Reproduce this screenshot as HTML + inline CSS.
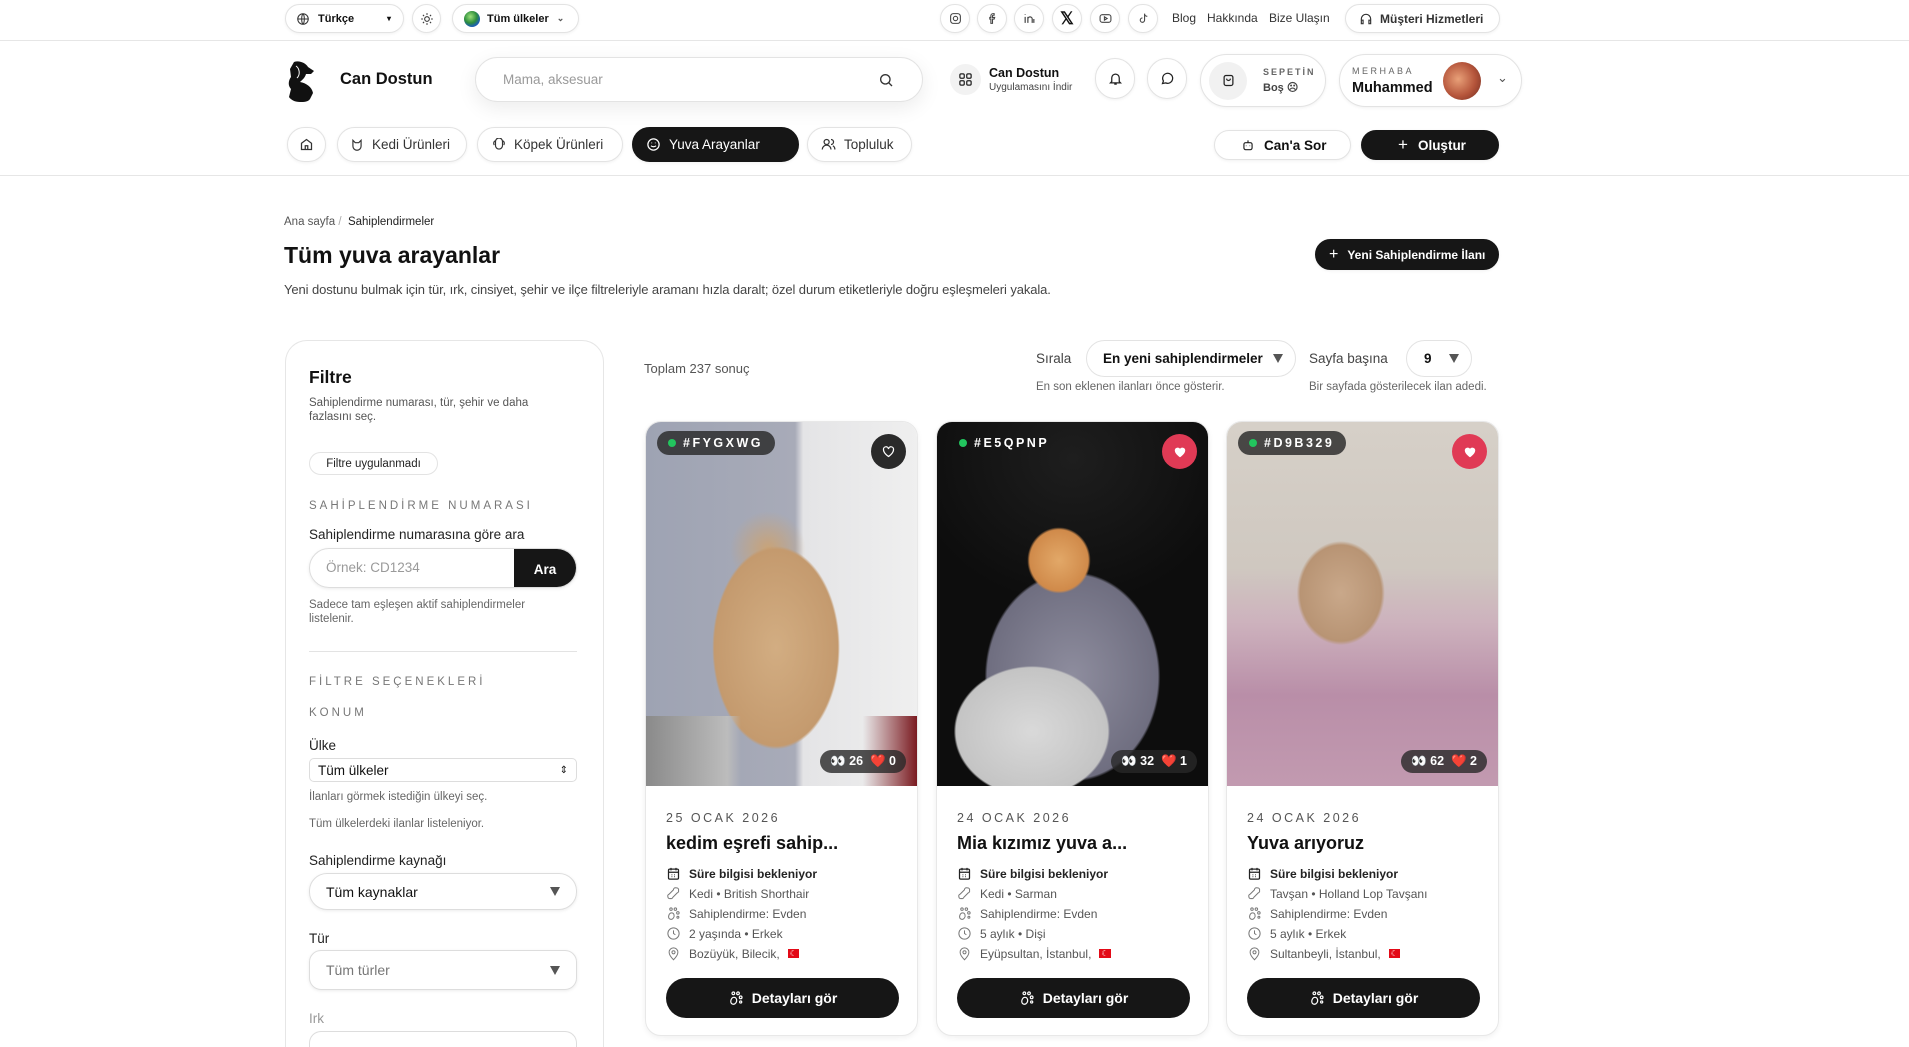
<!DOCTYPE html>
<html><head><meta charset="utf-8">
<style>
*{box-sizing:border-box;margin:0;padding:0}
html,body{width:1909px;height:1047px;overflow:hidden}
body{background:#fff;font-family:"Liberation Sans",sans-serif;color:#111;position:relative}
#wrap{position:absolute;left:0;top:0;width:1909px;height:1047px;overflow:hidden}
.a{position:absolute}
.pill{position:absolute;border:1px solid #e3e3e3;border-radius:999px;background:#fff;display:flex;align-items:center;box-shadow:0 1px 3px rgba(0,0,0,.06)}
.dark{background:#161616;color:#fff;border-color:#161616}
.t{position:absolute;white-space:nowrap}
.cap{letter-spacing:3px;font-size:11.5px;color:#777}
svg{display:block}
.card{position:absolute;top:421px;width:273px;height:615px;border:1px solid #e8e8e8;border-radius:16px;background:#fff;overflow:hidden;box-shadow:0 2px 6px rgba(0,0,0,.06)}
.img{position:absolute;left:0;top:0;width:100%;height:364px}
.tag{position:absolute;left:11px;top:9px;height:24px;border-radius:12px;background:rgba(40,40,40,.82);color:#fff;font-size:12.5px;font-weight:bold;letter-spacing:2.5px;display:flex;align-items:center;padding:0 12px 0 26px}
.tag:before{content:"";position:absolute;left:11px;top:8px;width:8px;height:8px;border-radius:50%;background:#22c55e}
.hb{position:absolute;right:11px;top:12px;width:35px;height:35px;border-radius:50%;display:flex;align-items:center;justify-content:center}
.st{position:absolute;right:11px;top:328px;height:23px;border-radius:12px;background:rgba(40,40,40,.8);color:#fff;font-size:12.5px;font-weight:bold;display:flex;align-items:center;padding:0 10px;gap:5px}
.date{position:absolute;left:20px;top:389px;font-size:12.5px;letter-spacing:2.5px;color:#555}
.ttl{position:absolute;left:20px;top:411px;font-size:18px;font-weight:bold;color:#111}
.row{position:absolute;left:20px;font-size:12px;color:#555;display:flex;align-items:center;gap:8px}
.row svg{width:15px;height:15px}
.btn{position:absolute;left:20px;top:556px;width:233px;height:40px;border-radius:20px;background:#161616;color:#fff;font-size:14px;font-weight:bold;display:flex;align-items:center;justify-content:center;gap:8px}
.sel{position:absolute;left:309px;width:268px;border:1px solid #ddd;border-radius:18px;display:flex;align-items:center;padding:0 16px;font-size:14px;box-shadow:0 1px 3px rgba(0,0,0,.08)}
.tri{position:absolute;right:16px;width:0;height:0;border-left:5px solid transparent;border-right:5px solid transparent;border-top:9px solid #555}
.lbl{position:absolute;left:309px;font-size:13.5px;color:#222}
.hint{position:absolute;left:309px;font-size:11.5px;color:#666;line-height:14px}
</style></head><body><div id="wrap">

<!-- top bar -->
<div class="a" style="left:0;top:40px;width:1909px;height:1px;background:#e6e6e6"></div>
<div class="pill" style="left:285px;top:4px;width:119px;height:29px;padding-left:10px;font-size:11px;font-weight:bold">
<svg width="14" height="14" viewBox="0 0 24 24" fill="none" stroke="#333" stroke-width="1.8"><circle cx="12" cy="12" r="9"/><path d="M3 12h18M12 3c3 3 3 15 0 18M12 3c-3 3-3 15 0 18"/></svg>
<span style="margin-left:8px">Türkçe</span><span style="position:absolute;right:12px;font-size:8px">▾</span></div>
<div class="pill" style="left:412px;top:4px;width:29px;height:29px;justify-content:center"><svg width="14" height="14" viewBox="0 0 24 24" fill="none" stroke="#333" stroke-width="1.8"><circle cx="12" cy="12" r="4"/><path d="M12 2v3M12 19v3M2 12h3M19 12h3M5 5l2 2M17 17l2 2M5 19l2-2M17 7l2-2"/></svg></div>
<div class="pill" style="left:452px;top:4px;width:127px;height:29px;padding-left:11px;font-size:11px;font-weight:bold">
<span style="width:16px;height:16px;border-radius:50%;background:radial-gradient(circle at 40% 35%,#9be07a,#2d8e3c 45%,#1d5fb0 70%)"></span><span style="margin-left:7px">Tüm ülkeler</span><span style="margin-left:8px;font-size:9px;color:#555">⌄</span></div>
<div class="pill" style="left:940px;top:4px;width:30px;height:29px;justify-content:center"><svg width="13" height="13" viewBox="0 0 24 24" fill="none" stroke="#444" stroke-width="2"><rect x="3" y="3" width="18" height="18" rx="5"/><circle cx="12" cy="12" r="4"/></svg></div>
<div class="pill" style="left:977px;top:4px;width:30px;height:29px;justify-content:center"><svg width="13" height="13" viewBox="0 0 24 24" fill="none" stroke="#444" stroke-width="2"><path d="M15 3h-2a4 4 0 0 0-4 4v3H7v3h2v8h3v-8h3l1-3h-4V7a1 1 0 0 1 1-1h2z"/></svg></div>
<div class="pill" style="left:1014px;top:4px;width:30px;height:29px;justify-content:center"><svg width="13" height="13" viewBox="0 0 24 24" fill="none" stroke="#444" stroke-width="2.2"><path d="M4 9v11M4 4v1M9 20V9M9 13a4 4 0 0 1 8 0v7M20 20v-7"/></svg></div>
<div class="pill" style="left:1052px;top:4px;width:30px;height:29px;justify-content:center;font-size:17px;font-weight:bold">𝕏</div>
<div class="pill" style="left:1090px;top:4px;width:30px;height:29px;justify-content:center"><svg width="13" height="13" viewBox="0 0 24 24" fill="none" stroke="#444" stroke-width="2"><rect x="2" y="5" width="20" height="14" rx="4"/><path d="M10 9l5 3-5 3z"/></svg></div>
<div class="pill" style="left:1128px;top:4px;width:30px;height:29px;justify-content:center"><svg width="13" height="13" viewBox="0 0 24 24" fill="none" stroke="#444" stroke-width="2"><path d="M14 3v12a4 4 0 1 1-4-4M14 3c0 3 2 5 5 5"/></svg></div>
<div class="t" style="left:1172px;top:11px;font-size:12px;color:#333">Blog</div>
<div class="t" style="left:1207px;top:11px;font-size:12px;color:#333">Hakkında</div>
<div class="t" style="left:1269px;top:11px;font-size:12px;color:#333">Bize Ulaşın</div>
<div class="pill" style="left:1345px;top:4px;width:155px;height:29px;padding-left:13px;font-size:12px;font-weight:bold;color:#333"><svg width="14" height="14" viewBox="0 0 24 24" fill="none" stroke="#333" stroke-width="2"><path d="M4 15v-3a8 8 0 0 1 16 0v3M4 14h3v6H4zM17 14h3v6h-3z"/></svg><span style="margin-left:7px">Müşteri Hizmetleri</span></div>

<!-- header -->
<svg class="a" style="left:284px;top:60px" width="34" height="42" viewBox="0 0 34 42"><path d="M10 2c5-2 12 1 14 5l6 4-3 3-5 0c-1 4-4 6-6 8 6 1 12 5 13 11l-3 6c-2 3-6 3-10 3-5 0-9-2-11-5l2-8c-3-3-3-8 0-12l-1-8z" fill="#111"/><path d="M12 6c3 2 5 8 1 12" stroke="#fff" stroke-width="1" fill="none"/></svg>
<div class="t" style="left:340px;top:70px;font-size:16.5px;font-weight:bold">Can Dostun</div>
<div class="pill" style="left:475px;top:57px;width:448px;height:45px;padding-left:27px;font-size:13.5px;color:#9a9a9a;box-shadow:0 6px 20px rgba(0,0,0,.08)">Mama, aksesuar<svg style="position:absolute;right:28px" width="16" height="16" viewBox="0 0 24 24" fill="none" stroke="#333" stroke-width="2"><circle cx="11" cy="11" r="7"/><path d="M16 16l5 5"/></svg></div>
<div class="a" style="left:950px;top:64px;width:31px;height:31px;border-radius:50%;background:#f2f2f2;display:flex;align-items:center;justify-content:center"><svg width="15" height="15" viewBox="0 0 24 24" fill="none" stroke="#222" stroke-width="2"><rect x="3" y="3" width="7" height="7" rx="2"/><rect x="14" y="3" width="7" height="7" rx="2"/><rect x="3" y="14" width="7" height="7" rx="2"/><rect x="14" y="14" width="7" height="7" rx="2"/></svg></div>
<div class="t" style="left:989px;top:66px;font-size:12.5px;font-weight:bold">Can Dostun</div>
<div class="t" style="left:989px;top:82px;font-size:10px;color:#444">Uygulamasını İndir</div>
<div class="pill" style="left:1095px;top:58px;width:40px;height:41px;justify-content:center"><svg width="15" height="15" viewBox="0 0 24 24" fill="none" stroke="#222" stroke-width="2"><path d="M6 17V11a6 6 0 0 1 12 0v6l2 2H4zM10 21h4"/></svg></div>
<div class="pill" style="left:1147px;top:58px;width:40px;height:41px;justify-content:center"><svg width="15" height="15" viewBox="0 0 24 24" fill="none" stroke="#222" stroke-width="2"><path d="M4 20l1.5-4A8 8 0 1 1 9 19z"/></svg></div>
<div class="pill" style="left:1200px;top:54px;width:126px;height:53px;padding-left:8px"><span style="width:38px;height:38px;border-radius:50%;background:#f1f1f1;display:flex;align-items:center;justify-content:center"><svg width="15" height="15" viewBox="0 0 24 24" fill="none" stroke="#222" stroke-width="2"><rect x="5" y="4" width="14" height="16" rx="3"/><path d="M9 9a3 3 0 0 0 6 0"/></svg></span>
<span style="position:absolute;left:62px;top:12px;font-size:9px;letter-spacing:2px;color:#666;font-weight:bold">SEPETİN</span><span style="position:absolute;left:62px;top:26px;font-size:11px;color:#444;font-weight:bold">Boş ☹</span></div>
<div class="pill" style="left:1339px;top:54px;width:183px;height:53px">
<span style="position:absolute;left:12px;top:11px;font-size:9px;letter-spacing:2.5px;color:#666">MERHABA</span>
<span style="position:absolute;left:12px;top:25px;font-size:14.5px;font-weight:bold">Muhammed</span>
<span style="position:absolute;left:103px;top:7px;width:38px;height:38px;border-radius:50%;background:radial-gradient(circle at 40% 45%,#e8a078,#b5553b 55%,#6d2a1e)"></span>
<span style="position:absolute;left:157px;top:15px;font-size:13px;color:#555">⌄</span></div>

<!-- nav -->
<div class="pill" style="left:287px;top:127px;width:39px;height:35px;justify-content:center"><svg width="15" height="15" viewBox="0 0 24 24" fill="none" stroke="#333" stroke-width="2"><path d="M4 10l8-6 8 6v10H4zM10 20v-6h4v6"/></svg></div>
<div class="pill" style="left:337px;top:127px;width:130px;height:35px;padding-left:12px;font-size:13.5px;color:#333"><svg width="14" height="14" viewBox="0 0 24 24" fill="none" stroke="#333" stroke-width="2"><path d="M5 4l4 4h6l4-4v10a7 7 0 0 1-14 0z"/></svg><span style="margin-left:8px">Kedi Ürünleri</span></div>
<div class="pill" style="left:477px;top:127px;width:146px;height:35px;padding-left:14px;font-size:13.5px;color:#333"><svg width="14" height="14" viewBox="0 0 24 24" fill="none" stroke="#333" stroke-width="2"><path d="M6 5c-3 0-4 5-2 7M18 5c3 0 4 5 2 7M6 6a6 6 0 0 1 12 0v7a6 6 0 0 1-12 0z"/></svg><span style="margin-left:8px">Köpek Ürünleri</span></div>
<div class="pill dark" style="left:632px;top:127px;width:167px;height:35px;padding-left:13px;font-size:13.5px"><svg width="15" height="15" viewBox="0 0 24 24" fill="none" stroke="#fff" stroke-width="2"><circle cx="12" cy="12" r="9"/><path d="M8 14a5 4 0 0 0 8 0M9 9v1M15 9v1"/></svg><span style="margin-left:8px">Yuva Arayanlar</span></div>
<div class="pill" style="left:807px;top:127px;width:105px;height:35px;padding-left:13px;font-size:13.5px;color:#333"><svg width="15" height="15" viewBox="0 0 24 24" fill="none" stroke="#333" stroke-width="2"><circle cx="9" cy="8" r="4"/><path d="M2 20a7 7 0 0 1 14 0M16 4a4 4 0 0 1 0 8M19 14a6 6 0 0 1 3 6"/></svg><span style="margin-left:8px">Topluluk</span></div>
<div class="pill" style="left:1214px;top:130px;width:137px;height:30px;padding-left:26px;font-size:13.5px;font-weight:bold"><svg width="14" height="14" viewBox="0 0 24 24" fill="none" stroke="#222" stroke-width="2"><rect x="5" y="8" width="14" height="12" rx="3"/><path d="M12 4v4M9 13v1M15 13v1"/></svg><span style="margin-left:9px">Can'a Sor</span></div>
<div class="pill dark" style="left:1361px;top:130px;width:138px;height:30px;padding-left:36px;font-size:13.5px;font-weight:bold"><span style="font-size:17px;font-weight:normal">+</span><span style="margin-left:10px">Oluştur</span></div>
<div class="a" style="left:0;top:175px;width:1909px;height:1px;background:#e6e6e6"></div>

<!-- page head -->
<div class="t" style="left:284px;top:216px;font-size:11.5px;color:#555">Ana sayfa <span style="color:#aaa">/</span> &nbsp;<span style="color:#222">Sahiplendirmeler</span></div>
<div class="t" style="left:284px;top:242px;font-size:23px;font-weight:bold">Tüm yuva arayanlar</div>
<div class="t" style="left:284px;top:282px;font-size:13px;color:#444;letter-spacing:-.1px">Yeni dostunu bulmak için tür, ırk, cinsiyet, şehir ve ilçe filtreleriyle aramanı hızla daralt; özel durum etiketleriyle doğru eşleşmeleri yakala.</div>
<div class="pill dark" style="left:1315px;top:239px;width:184px;height:31px;padding-left:13px;font-size:12px;font-weight:bold"><span style="font-size:16px;font-weight:normal">+</span><span style="margin-left:9px">Yeni Sahiplendirme İlanı</span></div>

<!-- filter -->
<div class="a" style="left:285px;top:340px;width:319px;height:707px;border:1px solid #e6e6e6;border-bottom:none;border-radius:22px 22px 0 0"></div>
<div class="t" style="left:309px;top:367px;font-size:17.5px;font-weight:bold">Filtre</div>
<div class="hint" style="top:396px;font-size:11.5px;color:#555">Sahiplendirme numarası, tür, şehir ve daha<br>fazlasını seç.</div>
<div class="pill" style="left:309px;top:452px;width:129px;height:23px;justify-content:center;font-size:11.5px;color:#222;box-shadow:none">Filtre uygulanmadı</div>
<div class="t cap" style="left:309px;top:500px">SAHİPLENDİRME NUMARASI</div>
<div class="lbl" style="top:527px">Sahiplendirme numarasına göre ara</div>
<div class="a" style="left:309px;top:548px;width:268px;height:40px;border:1px solid #ddd;border-radius:20px;overflow:hidden;box-shadow:0 1px 3px rgba(0,0,0,.08)"><span style="position:absolute;left:16px;top:11px;font-size:13.5px;color:#9a9a9a">Örnek: CD1234</span><span style="position:absolute;right:0;top:0;width:62px;height:40px;background:#161616;color:#fff;font-size:13.5px;font-weight:bold;display:flex;align-items:center;justify-content:center">Ara</span></div>
<div class="hint" style="top:598px">Sadece tam eşleşen aktif sahiplendirmeler<br>listelenir.</div>
<div class="a" style="left:309px;top:651px;width:268px;height:1px;background:#e3e3e3"></div>
<div class="t cap" style="left:309px;top:676px">FİLTRE SEÇENEKLERİ</div>
<div class="t cap" style="left:309px;top:707px">KONUM</div>
<div class="lbl" style="top:738px">Ülke</div>
<div class="sel" style="top:758px;height:24px;border-radius:5px;padding-left:8px;font-size:13.5px;box-shadow:none">Tüm ülkeler<span style="position:absolute;right:8px;font-size:10px">⇕</span></div>
<div class="hint" style="top:790px">İlanları görmek istediğin ülkeyi seç.</div>
<div class="hint" style="top:817px">Tüm ülkelerdeki ilanlar listeleniyor.</div>
<div class="lbl" style="top:853px">Sahiplendirme kaynağı</div>
<div class="sel" style="top:873px;height:37px">Tüm kaynaklar<span class="tri"></span></div>
<div class="lbl" style="top:931px">Tür</div>
<div class="sel" style="top:950px;height:40px;border-radius:12px;color:#777">Tüm türler<span class="tri"></span></div>
<div class="lbl" style="top:1011px;color:#999">Irk</div>
<div class="a" style="left:309px;top:1031px;width:268px;height:16px;border:1px solid #ddd;border-bottom:none;border-radius:12px 12px 0 0"></div>

<!-- results header -->
<div class="t" style="left:644px;top:361px;font-size:13px;color:#555">Toplam 237 sonuç</div>
<div class="t" style="left:1036px;top:351px;font-size:13.5px;color:#444">Sırala</div>
<div class="pill" style="left:1086px;top:340px;width:210px;height:37px;padding-left:16px;font-size:13.5px;font-weight:bold;box-shadow:none">En yeni sahiplendirmeler<span class="tri" style="right:12px"></span></div>
<div class="t" style="left:1309px;top:351px;font-size:13.5px;color:#444">Sayfa başına</div>
<div class="pill" style="left:1406px;top:340px;width:66px;height:37px;padding-left:17px;font-size:13.5px;font-weight:bold;box-shadow:none">9<span class="tri" style="right:12px"></span></div>
<div class="t" style="left:1036px;top:381px;font-size:11.5px;color:#666">En son eklenen ilanları önce gösterir.</div>
<div class="t" style="left:1309px;top:381px;font-size:11.5px;color:#666">Bir sayfada gösterilecek ilan adedi.</div>

<!-- cards -->
<svg width="0" height="0" style="position:absolute"><defs>
<symbol id="cal" viewBox="0 0 24 24"><g fill="none" stroke="#222" stroke-width="2"><rect x="4" y="5" width="16" height="16" rx="2"/><path d="M4 10h16M8 3v4M16 3v4M9 14h1M13 14h1M9 17h1M13 17h1"/></g></symbol>
<symbol id="bone" viewBox="0 0 24 24"><path d="M17 3a3 3 0 0 1 3 4 3 3 0 0 1-2 4l-7 7a3 3 0 0 1-4 2 3 3 0 0 1-4-3 3 3 0 0 1 2-4l7-7a3 3 0 0 1 4-3z" fill="none" stroke="#777" stroke-width="1.6"/></symbol>
<symbol id="paw" viewBox="0 0 24 24"><g fill="none" stroke="#777" stroke-width="1.6"><circle cx="8" cy="5" r="2"/><circle cx="15" cy="5" r="2"/><circle cx="19" cy="11" r="2"/><circle cx="19" cy="18" r="1.6"/><path d="M5 20c-2-3 0-9 4-9s5 5 3 8-5 3-7 1z"/></g></symbol>
<symbol id="pawW" viewBox="0 0 24 24"><g fill="none" stroke="#fff" stroke-width="1.8"><circle cx="8" cy="5" r="2"/><circle cx="15" cy="5" r="2"/><circle cx="19" cy="11" r="2"/><circle cx="19" cy="18" r="1.6"/><path d="M5 20c-2-3 0-9 4-9s5 5 3 8-5 3-7 1z"/></g></symbol>
<symbol id="clk" viewBox="0 0 24 24"><g fill="none" stroke="#777" stroke-width="1.6"><circle cx="12" cy="12" r="9"/><path d="M12 7v5l3 2"/></g></symbol>
<symbol id="pin" viewBox="0 0 24 24"><g fill="none" stroke="#777" stroke-width="1.6"><path d="M12 22s7-7 7-12a7 7 0 0 0-14 0c0 5 7 12 7 12z"/><circle cx="12" cy="10" r="2.5"/></g></symbol>
</defs></svg>

<div class="card" style="left:645px">
<div class="img" style="background:radial-gradient(ellipse 38% 45% at 48% 62%,#d2ad82 0,#c49a6e 60%,transparent 62%),radial-gradient(ellipse 20% 15% at 45% 35%,#c9a377,transparent 70%),linear-gradient(90deg,#9ea3b3 0,#a8abb8 55%,#e4e4e6 58%,#efefef 100%)"><div style="position:absolute;left:0;bottom:0;width:100%;height:70px;background:linear-gradient(90deg,#8a8a8a,#bcbcbc 30%,transparent 35%,transparent 80%,#7a1a20)"></div></div>
<div class="tag">#FYGXWG</div>
<div class="hb" style="background:#2a2a2a"><svg width="15" height="15" viewBox="0 0 24 24" fill="none" stroke="#fff" stroke-width="2"><path d="M12 20s-8-5-8-11a4 4 0 0 1 8-1 4 4 0 0 1 8 1c0 6-8 11-8 11z"/></svg></div>
<div class="st">👀 26 &nbsp;❤️ 0</div>
<div class="date">25 OCAK 2026</div><div class="ttl">kedim eşrefi sahip...</div>
<div class="row" style="top:444px;color:#222;font-weight:bold"><svg><use href="#cal"/></svg>Süre bilgisi bekleniyor</div>
<div class="row" style="top:464px"><svg><use href="#bone"/></svg>Kedi • British Shorthair</div>
<div class="row" style="top:484px"><svg><use href="#paw"/></svg>Sahiplendirme: Evden</div>
<div class="row" style="top:504px"><svg><use href="#clk"/></svg>2 yaşında • Erkek</div>
<div class="row" style="top:524px"><svg><use href="#pin"/></svg>Bozüyük, Bilecik, <span style="background:#e30a17;color:#fff;font-size:8px;padding:0 2px">☾</span></div>
<div class="btn"><svg width="16" height="16"><use href="#pawW"/></svg>Detayları gör</div>
</div>

<div class="card" style="left:936px">
<div class="img" style="background:radial-gradient(ellipse 18% 14% at 45% 38%,#e2a868,#d08a4a 60%,transparent 65%),radial-gradient(ellipse 40% 25% at 35% 85%,#d9d9d9,#c4c4c4 70%,transparent 72%),radial-gradient(ellipse 45% 40% at 50% 70%,#8e8d9e,#6f6e80 70%,transparent 72%),radial-gradient(ellipse 60% 40% at 50% 10%,#1e1e1e,#0d0d0d)"></div>
<div class="tag" style="background:transparent">#E5QPNP</div>
<div class="hb" style="background:#e03a55"><svg width="14" height="14" viewBox="0 0 24 24" fill="#fff"><path d="M12 21s-9-5.5-9-12a5 5 0 0 1 9-2.5A5 5 0 0 1 21 9c0 6.5-9 12-9 12z"/></svg></div>
<div class="st">👀 32 &nbsp;❤️ 1</div>
<div class="date">24 OCAK 2026</div><div class="ttl">Mia kızımız yuva a...</div>
<div class="row" style="top:444px;color:#222;font-weight:bold"><svg><use href="#cal"/></svg>Süre bilgisi bekleniyor</div>
<div class="row" style="top:464px"><svg><use href="#bone"/></svg>Kedi • Sarman</div>
<div class="row" style="top:484px"><svg><use href="#paw"/></svg>Sahiplendirme: Evden</div>
<div class="row" style="top:504px"><svg><use href="#clk"/></svg>5 aylık • Dişi</div>
<div class="row" style="top:524px"><svg><use href="#pin"/></svg>Eyüpsultan, İstanbul, <span style="background:#e30a17;color:#fff;font-size:8px;padding:0 2px">☾</span></div>
<div class="btn"><svg width="16" height="16"><use href="#pawW"/></svg>Detayları gör</div>
</div>

<div class="card" style="left:1226px">
<div class="img" style="background:radial-gradient(ellipse 25% 22% at 42% 47%,#c9a88a,#b89474 60%,transparent 65%),linear-gradient(180deg,#d6d0c8 0,#cfc8c0 40%,#cdb2bd 55%,#b98ea8 75%,#c29ab0 100%)"></div>
<div class="tag">#D9B329</div>
<div class="hb" style="background:#e03a55"><svg width="14" height="14" viewBox="0 0 24 24" fill="#fff"><path d="M12 21s-9-5.5-9-12a5 5 0 0 1 9-2.5A5 5 0 0 1 21 9c0 6.5-9 12-9 12z"/></svg></div>
<div class="st">👀 62 &nbsp;❤️ 2</div>
<div class="date">24 OCAK 2026</div><div class="ttl">Yuva arıyoruz</div>
<div class="row" style="top:444px;color:#222;font-weight:bold"><svg><use href="#cal"/></svg>Süre bilgisi bekleniyor</div>
<div class="row" style="top:464px"><svg><use href="#bone"/></svg>Tavşan • Holland Lop Tavşanı</div>
<div class="row" style="top:484px"><svg><use href="#paw"/></svg>Sahiplendirme: Evden</div>
<div class="row" style="top:504px"><svg><use href="#clk"/></svg>5 aylık • Erkek</div>
<div class="row" style="top:524px"><svg><use href="#pin"/></svg>Sultanbeyli, İstanbul, <span style="background:#e30a17;color:#fff;font-size:8px;padding:0 2px">☾</span></div>
<div class="btn"><svg width="16" height="16"><use href="#pawW"/></svg>Detayları gör</div>
</div>

</div></body></html>
